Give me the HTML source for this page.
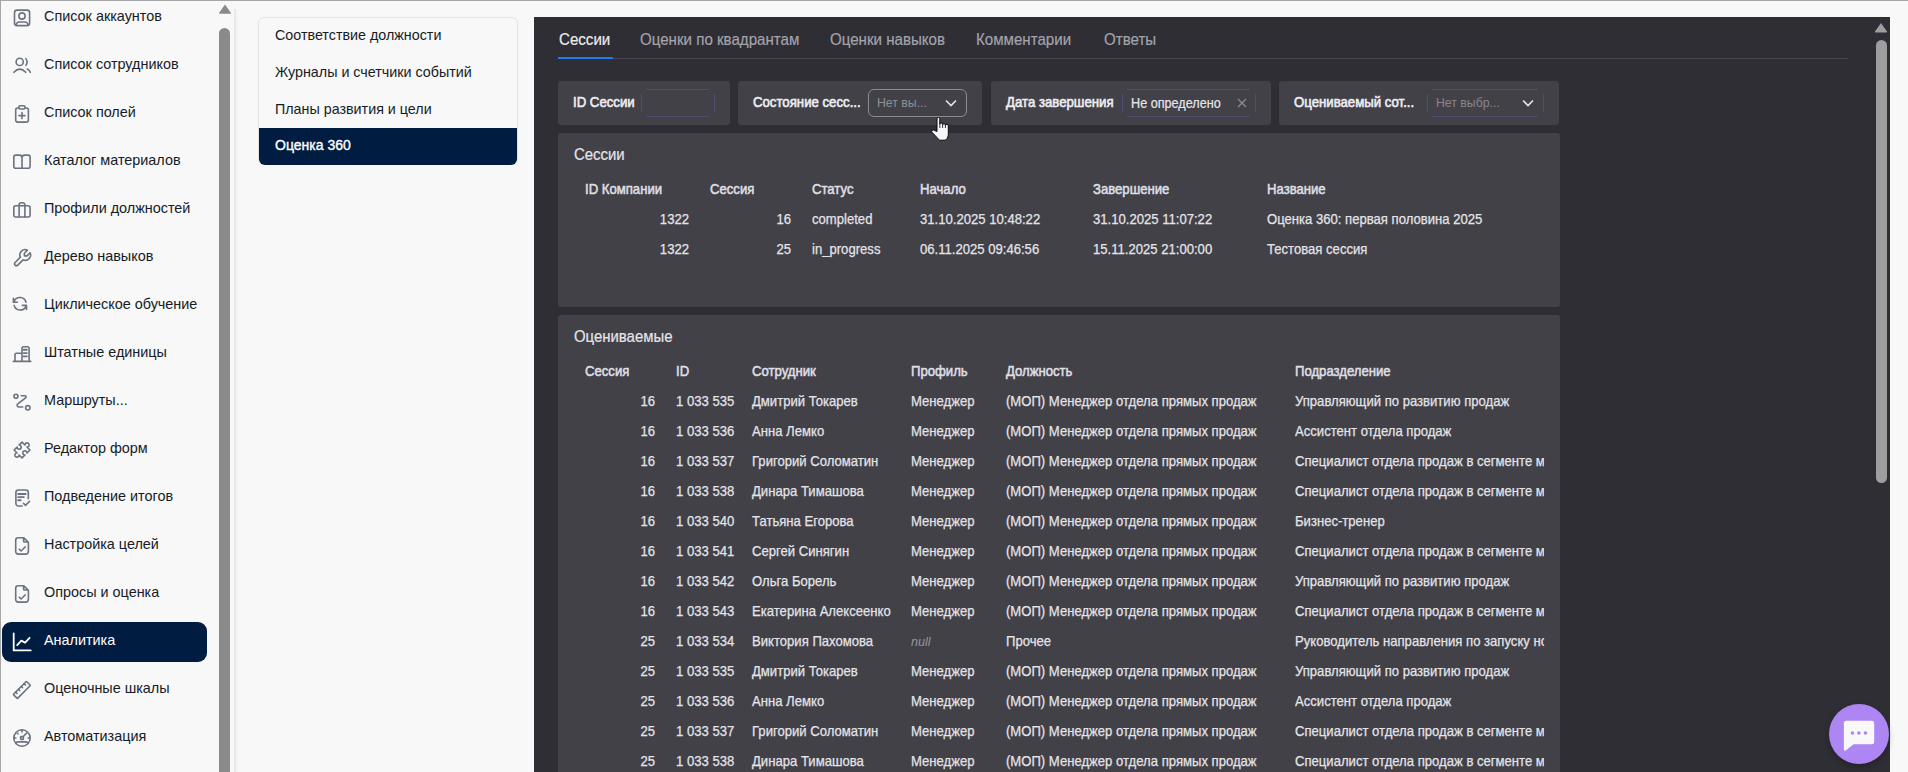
<!DOCTYPE html>
<html><head><meta charset="utf-8"><title>Аналитика</title>
<style>
html,body{margin:0;padding:0;}
body{width:1908px;height:772px;overflow:hidden;position:relative;background:#f8f8f8;font-family:"Liberation Sans",sans-serif;}
.a{position:absolute;white-space:nowrap;}
.nav{position:absolute;left:44px;font-size:14.4px;line-height:20px;color:#161b26;white-space:nowrap;}
.ic{position:absolute;left:13px;width:18px;height:18px;}
.sub{position:absolute;left:275px;font-size:14.3px;line-height:20px;color:#161b26;white-space:nowrap;}
.dp{position:absolute;left:534px;top:17px;width:1356px;height:800px;background:#2f2e35;}
.tab{position:absolute;top:30px;font-size:16.6px;line-height:20px;color:#a3a3ab;-webkit-text-stroke:0.2px #a3a3ab;white-space:nowrap;transform:scaleX(0.91);transform-origin:0 0;}
.card{position:absolute;background:#424148;border-radius:3px;}
.flab{position:absolute;font-size:13.9px;font-weight:400;-webkit-text-stroke:0.6px #ededf1;line-height:16px;color:#ededf1;white-space:nowrap;transform:scaleX(0.95);transform-origin:0 0;}
.th{position:absolute;font-size:13.9px;font-weight:400;-webkit-text-stroke:0.55px #dedee3;line-height:30px;color:#dedee3;white-space:nowrap;transform:scaleX(0.945);transform-origin:0 0;}
.td{position:absolute;font-size:14.3px;line-height:30px;color:#e4e4e8;-webkit-text-stroke:0.25px #e4e4e8;white-space:nowrap;transform:scaleX(0.916);transform-origin:0 0;}
.ttl{font-size:16.4px;line-height:20px;color:#e6e6ea;-webkit-text-stroke:0.2px #e6e6ea;transform:scaleX(0.91);transform-origin:0 0;}
.sm{font-size:13.5px;line-height:16px;transform:scaleX(0.91);transform-origin:0 0;}
.td.r{text-align:right;transform-origin:100% 0;}
</style></head><body>

<div class="a" style="left:0;top:0;width:1908px;height:1px;background:#a6a6a6"></div>
<div class="a" style="left:0;top:0;width:1px;height:772px;background:#a6a6a6"></div>
<div class="a" style="left:234px;top:9px;width:2px;height:763px;background:#e9e9ea"></div>
<div class="a" style="left:236px;top:9px;width:2px;height:763px;background:#f0f5f6"></div>
<svg class="a" style="left:217px;top:3px" width="16" height="12"><path d="M8 1.5 L14 10 Q14.3 10.8 13.3 10.8 L2.7 10.8 Q1.7 10.8 2 10 Z" fill="#8a8a8a"/></svg>
<div class="a" style="left:219px;top:28px;width:11px;height:760px;background:#8a8a8a;border-radius:5.5px"></div>
<svg class="a" style="left:0;top:0px" width="40" height="40" fill="none" stroke="#6b7280" stroke-width="1.6" stroke-linecap="round" stroke-linejoin="round"><rect x="14.5" y="10.1" width="15.1" height="15.5" rx="2.6"/><circle cx="22" cy="16" r="3.1"/><path d="M15.9 25 Q16.6 22 19.3 22 H24.8 Q27.5 22 28.2 25"/></svg>
<div class="nav" style="top:6px;">Список аккаунтов</div>
<svg class="a" style="left:0;top:48px" width="40" height="40" fill="none" stroke="#6b7280" stroke-width="1.6" stroke-linecap="round" stroke-linejoin="round"><circle cx="19.7" cy="13.9" r="3.6"/><path d="M25.9 10.6 Q28.3 13.9 25.9 17.2"/><path d="M13.9 24.3 Q19.8 18 25.7 24.3"/><path d="M27.3 21.1 Q29.3 22 30.3 24.3"/></svg>
<div class="nav" style="top:54px;">Список сотрудников</div>
<svg class="a" style="left:0;top:96px" width="40" height="40" fill="none" stroke="#6b7280" stroke-width="1.6" stroke-linecap="round" stroke-linejoin="round"><path d="M18.8 12 H17.7 A2 2 0 0 0 15.7 14 V24.1 A2 2 0 0 0 17.7 26.1 H26.4 A2 2 0 0 0 28.4 24.1 V14 A2 2 0 0 0 26.4 12 H25.2"/><rect x="18.8" y="9.8" width="6.3" height="3.2" rx="1.4"/><path d="M22 16.6 V22.6 M19 19.6 H25"/></svg>
<div class="nav" style="top:102px;">Список полей</div>
<svg class="a" style="left:0;top:144px" width="40" height="40" fill="none" stroke="#6b7280" stroke-width="1.6" stroke-linecap="round" stroke-linejoin="round"><path d="M22 24.2 H15.8 A2 2 0 0 1 13.8 22.2 V13.1 A2 2 0 0 1 15.8 11.1 H19.5 A2.5 2.5 0 0 1 22 13.6 V24.2 H28.1 A2 2 0 0 0 30.1 22.2 V13.1 A2 2 0 0 0 28.1 11.1 H24.5 A2.5 2.5 0 0 0 22 13.6"/></svg>
<div class="nav" style="top:150px;">Каталог материалов</div>
<svg class="a" style="left:0;top:192px" width="40" height="40" fill="none" stroke="#6b7280" stroke-width="1.6" stroke-linecap="round" stroke-linejoin="round"><rect x="13.8" y="13.8" width="16.3" height="11.2" rx="2"/><path d="M19.1 13.8 V12.9 A2.2 2.2 0 0 1 21.3 10.7 H22.7 A2.2 2.2 0 0 1 24.9 12.9 V13.8 M19.1 13.8 V25 M24.9 13.8 V25"/></svg>
<div class="nav" style="top:198px;">Профили должностей</div>
<svg class="a" style="left:0;top:240px" width="40" height="40" fill="none" stroke="#6b7280" stroke-width="1.6" stroke-linecap="round" stroke-linejoin="round"><path transform="translate(33.16 7.05) scale(-0.88 0.88)" d="M7 10h3v-3l-3.5 -3.5a6 6 0 0 1 8 8l6 6a2 2 0 0 1 -3 3l-6 -6a6 6 0 0 1 -8 -8l3.5 3.5" stroke-width="1.82"/></svg>
<div class="nav" style="top:246px;">Дерево навыков</div>
<svg class="a" style="left:0;top:288px" width="40" height="40" fill="none" stroke="#6b7280" stroke-width="1.6" stroke-linecap="round" stroke-linejoin="round"><path d="M14.2 13.2 A6.3 6.3 0 0 1 26 14.2 M13.4 10.3 V14.3 H17.4"/><path d="M14.1 17.4 A6.3 6.3 0 0 0 25.8 18.6 M26.5 21.6 V17.4 H22.4"/></svg>
<div class="nav" style="top:294px;">Циклическое обучение</div>
<svg class="a" style="left:0;top:336px" width="40" height="40" fill="none" stroke="#6b7280" stroke-width="1.6" stroke-linecap="round" stroke-linejoin="round"><path d="M13.4 25.4 H30.8 M15 25.4 V18.7 A1.5 1.5 0 0 1 16.5 17.2 H22 M22 25.4 V12.3 A1.5 1.5 0 0 1 23.5 10.8 H27.6 A1.5 1.5 0 0 1 29.1 12.3 V25.4"/><path d="M23.7 13.8 H26.8 M23.7 17.1 H26.8 M23.7 20.4 H26.8" stroke-width="1.9"/></svg>
<div class="nav" style="top:342px;">Штатные единицы</div>
<svg class="a" style="left:0;top:384px" width="40" height="40" fill="none" stroke="#6b7280" stroke-width="1.6" stroke-linecap="round" stroke-linejoin="round"><circle cx="15.95" cy="12.2" r="2"/><circle cx="27.8" cy="23.8" r="2.2"/><path d="M21.3 11.8 H25 A1.1 1.1 0 0 1 25.6 13.8 L17.8 19.9 A1.7 1.7 0 0 0 18.8 23 H22.7"/></svg>
<div class="nav" style="top:390px;">Маршруты...</div>
<svg class="a" style="left:0;top:432px" width="40" height="40" fill="none" stroke="#6b7280" stroke-width="1.6" stroke-linecap="round" stroke-linejoin="round"><path transform="translate(22 18) rotate(45)" d="M-5.6 -5.6 H-1.4 A2.1 2.1 0 1 1 1.4 -5.6 H5.6 V-1.4 A2.1 2.1 0 1 0 5.6 1.4 V5.6 H1.4 A2.1 2.1 0 1 1 -1.4 5.6 H-5.6 V1.4 A2.1 2.1 0 1 0 -5.6 -1.4 Z"/></svg>
<div class="nav" style="top:438px;">Редактор форм</div>
<svg class="a" style="left:0;top:480px" width="40" height="40" fill="none" stroke="#6b7280" stroke-width="1.6" stroke-linecap="round" stroke-linejoin="round"><path d="M22.2 26 H18.4 A2.5 2.5 0 0 1 15.9 23.5 V12.5 A2.5 2.5 0 0 1 18.4 10 H25.8 A2.5 2.5 0 0 1 28.3 12.5 V18.8"/><path d="M18.2 14 H25.7 M18.2 17.1 H23.8 M18.2 20.2 H20.7" stroke-width="1.9"/><path d="M23.4 23.3 L25.5 25.4 L29.6 21.3"/></svg>
<div class="nav" style="top:486px;">Подведение итогов</div>
<svg class="a" style="left:0;top:528px" width="40" height="40" fill="none" stroke="#6b7280" stroke-width="1.6" stroke-linecap="round" stroke-linejoin="round"><path d="M23.8 9.8 H18.2 A2.5 2.5 0 0 0 15.7 12.3 V23.6 A2.5 2.5 0 0 0 18.2 26.1 H25.9 A2.5 2.5 0 0 0 28.4 23.6 V14.4 Z M23.6 9.8 V13.2 A0.8 0.8 0 0 0 24.4 14 H28.4"/><path d="M19.3 21.2 L21.1 23 L25.3 18.8"/></svg>
<div class="nav" style="top:534px;">Настройка целей</div>
<svg class="a" style="left:0;top:576px" width="40" height="40" fill="none" stroke="#6b7280" stroke-width="1.6" stroke-linecap="round" stroke-linejoin="round"><path d="M23.8 9.8 H18.2 A2.5 2.5 0 0 0 15.7 12.3 V23.6 A2.5 2.5 0 0 0 18.2 26.1 H25.9 A2.5 2.5 0 0 0 28.4 23.6 V14.4 Z M23.6 9.8 V13.2 A0.8 0.8 0 0 0 24.4 14 H28.4"/><path d="M19.3 21.2 L21.1 23 L25.3 18.8"/></svg>
<div class="nav" style="top:582px;">Опросы и оценка</div>
<div class="a" style="left:2px;top:622px;width:205px;height:40px;background:#001c40;border-radius:9px"></div>
<svg class="a" style="left:0;top:624px" width="40" height="40" fill="none" stroke="#ffffff" stroke-width="1.6" stroke-linecap="round" stroke-linejoin="round"><path d="M13.7 9.3 V26.4 H30.7 M17.2 21.1 L21.3 16.6 L25.1 18.6 L29.6 13.8" stroke-width="1.8"/></svg>
<div class="nav" style="top:630px;color:#fff;font-weight:500">Аналитика</div>
<svg class="a" style="left:0;top:672px" width="40" height="40" fill="none" stroke="#6b7280" stroke-width="1.6" stroke-linecap="round" stroke-linejoin="round"><g transform="translate(21.9 17.9) rotate(-45)"><rect x="-9.3" y="-2.9" width="18.6" height="5.8" rx="0.6"/><path d="M-6 -2.9 V-1.1 M-2 -2.9 V-1.1 M2 -2.9 V-1.1 M6 -2.9 V-1.1"/></g></svg>
<div class="nav" style="top:678px;">Оценочные шкалы</div>
<svg class="a" style="left:0;top:720px" width="40" height="40" fill="none" stroke="#6b7280" stroke-width="1.6" stroke-linecap="round" stroke-linejoin="round"><circle cx="22" cy="18" r="8.2"/><rect x="20.6" y="16.6" width="2.8" height="2.8" rx="0.6"/><path d="M22 10.3 V11.9 M14.3 18 H15.9 M28.1 18 H29.7 M17.3 13.3 L18 14 M23.6 16.3 L26.6 13 M15.7 23.3 Q16.6 21.9 18.2 21.9 H25.8 Q27.4 21.9 28.3 23.3"/></svg>
<div class="nav" style="top:726px;">Автоматизация</div>
<div class="a" style="left:258px;top:17px;width:258px;height:146px;border:1px solid #e3e3e3;border-radius:6px;background:#f8f8f8"></div>
<div class="a" style="left:259px;top:128px;width:258px;height:37px;background:#001c40;border-radius:0 0 6px 6px"></div>
<div class="sub" style="top:25px">Соответствие должности</div>
<div class="sub" style="top:62px">Журналы и счетчики событий</div>
<div class="sub" style="top:99px">Планы развития и цели</div>
<div class="sub" style="top:135px;color:#fff;font-size:14px;-webkit-text-stroke:0.35px #fff">Оценка 360</div>
<div class="dp"></div>
<div class="tab" style="left:559px;color:#ececf0;-webkit-text-stroke:0.2px #ececf0">Сессии</div>
<div class="tab" style="left:640px;">Оценки по квадрантам</div>
<div class="tab" style="left:830px;">Оценки навыков</div>
<div class="tab" style="left:976px;">Комментарии</div>
<div class="tab" style="left:1104px;">Ответы</div>
<div class="a" style="left:558px;top:58px;width:1290px;height:1px;background:#46454c"></div>
<div class="a" style="left:558px;top:57px;width:55px;height:2px;background:#1e7cf2"></div>
<div class="card" style="left:558px;top:81px;width:172px;height:44px"></div>
<div class="flab" style="left:573px;top:94px">ID Сессии</div>
<div class="a" style="left:646px;top:89px;width:63px;height:1px;background:#4c4e74"></div>
<div class="a" style="left:646px;top:116px;width:63px;height:1px;background:#4c4e74"></div>
<div class="a" style="left:641px;top:94px;width:1px;height:18px;background:#4c4e74"></div>
<div class="a" style="left:714px;top:94px;width:1px;height:18px;background:#4c4e74"></div>
<div class="card" style="left:738px;top:81px;width:244px;height:44px"></div>
<div class="flab" style="left:753px;top:94px">Состояние сесс...</div>
<div class="a" style="left:868px;top:89px;width:97px;height:26px;border:1px solid #8c8c93;border-radius:6px"></div>
<div class="a sm" style="left:877px;top:95px;color:#8f8f96">Нет вы...</div>
<svg class="a" style="left:944px;top:98px" width="14" height="10"><path d="M2 2.5 L7 7.5 L12 2.5" fill="none" stroke="#e6e6ea" stroke-width="1.6"/></svg>
<div class="card" style="left:991px;top:81px;width:280px;height:44px"></div>
<div class="flab" style="left:1006px;top:94px">Дата завершения</div>
<div class="a" style="left:1127px;top:89px;width:123px;height:1px;background:#4c4e74"></div>
<div class="a" style="left:1127px;top:116px;width:123px;height:1px;background:#4c4e74"></div>
<div class="a" style="left:1122px;top:94px;width:1px;height:18px;background:#4c4e74"></div>
<div class="a" style="left:1255px;top:94px;width:1px;height:18px;background:#4c4e74"></div>
<div class="a sm" style="left:1131px;top:95px;width:100px;overflow:hidden;color:#e6e6ea;font-size:13.9px;-webkit-text-stroke:0.2px #e6e6ea">Не определено</div>
<svg class="a" style="left:1236px;top:97px" width="12" height="12"><path d="M2 2 L10 10 M10 2 L2 10" fill="none" stroke="#8a8a92" stroke-width="1.3"/></svg>
<div class="card" style="left:1279px;top:81px;width:280px;height:44px"></div>
<div class="flab" style="left:1294px;top:94px">Оцениваемый сот...</div>
<div class="a" style="left:1432px;top:89px;width:106px;height:1px;background:#4c4e74"></div>
<div class="a" style="left:1432px;top:116px;width:106px;height:1px;background:#4c4e74"></div>
<div class="a" style="left:1427px;top:94px;width:1px;height:18px;background:#4c4e74"></div>
<div class="a" style="left:1543px;top:94px;width:1px;height:18px;background:#4c4e74"></div>
<div class="a sm" style="left:1436px;top:95px;color:#86868d">Нет выбр...</div>
<svg class="a" style="left:1521px;top:98px" width="14" height="10"><path d="M2 2.5 L7 7.5 L12 2.5" fill="none" stroke="#e6e6ea" stroke-width="1.6"/></svg>
<div class="card" style="left:558px;top:133px;width:1002px;height:174px"></div>
<div class="a ttl" style="left:574px;top:144px">Сессии</div>
<div class="th" style="left:585px;top:174px">ID Компании</div>
<div class="th" style="left:710px;top:174px">Сессия</div>
<div class="th" style="left:812px;top:174px">Статус</div>
<div class="th" style="left:920px;top:174px">Начало</div>
<div class="th" style="left:1093px;top:174px">Завершение</div>
<div class="th" style="left:1267px;top:174px">Название</div>
<div class="td r" style="left:589px;width:100px;top:204px">1322</div>
<div class="td r" style="left:691px;width:100px;top:204px">16</div>
<div class="td" style="left:812px;top:204px">completed</div>
<div class="td" style="left:920px;top:204px">31.10.2025 10:48:22</div>
<div class="td" style="left:1093px;top:204px">31.10.2025 11:07:22</div>
<div class="td" style="left:1267px;top:204px">Оценка 360: первая половина 2025</div>
<div class="td r" style="left:589px;width:100px;top:234px">1322</div>
<div class="td r" style="left:691px;width:100px;top:234px">25</div>
<div class="td" style="left:812px;top:234px">in_progress</div>
<div class="td" style="left:920px;top:234px">06.11.2025 09:46:56</div>
<div class="td" style="left:1093px;top:234px">15.11.2025 21:00:00</div>
<div class="td" style="left:1267px;top:234px">Тестовая сессия</div>
<div class="card" style="left:558px;top:315px;width:1002px;height:500px"></div>
<div class="a ttl" style="left:574px;top:326px">Оцениваемые</div>
<div class="th" style="left:585px;top:356px">Сессия</div>
<div class="th" style="left:676px;top:356px">ID</div>
<div class="th" style="left:752px;top:356px">Сотрудник</div>
<div class="th" style="left:911px;top:356px">Профиль</div>
<div class="th" style="left:1006px;top:356px">Должность</div>
<div class="th" style="left:1295px;top:356px">Подразделение</div>
<div class="td r" style="left:555px;width:100px;top:386px">16</div>
<div class="td" style="left:676px;top:386px">1 033 535</div>
<div class="td" style="left:752px;top:386px">Дмитрий Токарев</div>
<div class="td" style="left:911px;top:386px">Менеджер</div>
<div class="td" style="left:1006px;top:386px">(МОП) Менеджер отдела прямых продаж</div>
<div class="td" style="left:1295px;top:386px;width:272px;overflow:hidden">Управляющий по развитию продаж</div>
<div class="td r" style="left:555px;width:100px;top:416px">16</div>
<div class="td" style="left:676px;top:416px">1 033 536</div>
<div class="td" style="left:752px;top:416px">Анна Лемко</div>
<div class="td" style="left:911px;top:416px">Менеджер</div>
<div class="td" style="left:1006px;top:416px">(МОП) Менеджер отдела прямых продаж</div>
<div class="td" style="left:1295px;top:416px;width:272px;overflow:hidden">Ассистент отдела продаж</div>
<div class="td r" style="left:555px;width:100px;top:446px">16</div>
<div class="td" style="left:676px;top:446px">1 033 537</div>
<div class="td" style="left:752px;top:446px">Григорий Соломатин</div>
<div class="td" style="left:911px;top:446px">Менеджер</div>
<div class="td" style="left:1006px;top:446px">(МОП) Менеджер отдела прямых продаж</div>
<div class="td" style="left:1295px;top:446px;width:272px;overflow:hidden">Специалист отдела продаж в сегменте малого бизнеса</div>
<div class="td r" style="left:555px;width:100px;top:476px">16</div>
<div class="td" style="left:676px;top:476px">1 033 538</div>
<div class="td" style="left:752px;top:476px">Динара Тимашова</div>
<div class="td" style="left:911px;top:476px">Менеджер</div>
<div class="td" style="left:1006px;top:476px">(МОП) Менеджер отдела прямых продаж</div>
<div class="td" style="left:1295px;top:476px;width:272px;overflow:hidden">Специалист отдела продаж в сегменте малого бизнеса</div>
<div class="td r" style="left:555px;width:100px;top:506px">16</div>
<div class="td" style="left:676px;top:506px">1 033 540</div>
<div class="td" style="left:752px;top:506px">Татьяна Егорова</div>
<div class="td" style="left:911px;top:506px">Менеджер</div>
<div class="td" style="left:1006px;top:506px">(МОП) Менеджер отдела прямых продаж</div>
<div class="td" style="left:1295px;top:506px;width:272px;overflow:hidden">Бизнес-тренер</div>
<div class="td r" style="left:555px;width:100px;top:536px">16</div>
<div class="td" style="left:676px;top:536px">1 033 541</div>
<div class="td" style="left:752px;top:536px">Сергей Синягин</div>
<div class="td" style="left:911px;top:536px">Менеджер</div>
<div class="td" style="left:1006px;top:536px">(МОП) Менеджер отдела прямых продаж</div>
<div class="td" style="left:1295px;top:536px;width:272px;overflow:hidden">Специалист отдела продаж в сегменте малого бизнеса</div>
<div class="td r" style="left:555px;width:100px;top:566px">16</div>
<div class="td" style="left:676px;top:566px">1 033 542</div>
<div class="td" style="left:752px;top:566px">Ольга Борель</div>
<div class="td" style="left:911px;top:566px">Менеджер</div>
<div class="td" style="left:1006px;top:566px">(МОП) Менеджер отдела прямых продаж</div>
<div class="td" style="left:1295px;top:566px;width:272px;overflow:hidden">Управляющий по развитию продаж</div>
<div class="td r" style="left:555px;width:100px;top:596px">16</div>
<div class="td" style="left:676px;top:596px">1 033 543</div>
<div class="td" style="left:752px;top:596px">Екатерина Алексеенко</div>
<div class="td" style="left:911px;top:596px">Менеджер</div>
<div class="td" style="left:1006px;top:596px">(МОП) Менеджер отдела прямых продаж</div>
<div class="td" style="left:1295px;top:596px;width:272px;overflow:hidden">Специалист отдела продаж в сегменте малого бизнеса</div>
<div class="td r" style="left:555px;width:100px;top:626px">25</div>
<div class="td" style="left:676px;top:626px">1 033 534</div>
<div class="td" style="left:752px;top:626px">Виктория Пахомова</div>
<div class="td" style="left:911px;top:628px;font-style:italic;color:#96969c;-webkit-text-stroke:0;font-size:12.6px;transform:none;line-height:29px">null</div>
<div class="td" style="left:1006px;top:626px">Прочее</div>
<div class="td" style="left:1295px;top:626px;width:272px;overflow:hidden">Руководитель направления по запуску новых продуктов</div>
<div class="td r" style="left:555px;width:100px;top:656px">25</div>
<div class="td" style="left:676px;top:656px">1 033 535</div>
<div class="td" style="left:752px;top:656px">Дмитрий Токарев</div>
<div class="td" style="left:911px;top:656px">Менеджер</div>
<div class="td" style="left:1006px;top:656px">(МОП) Менеджер отдела прямых продаж</div>
<div class="td" style="left:1295px;top:656px;width:272px;overflow:hidden">Управляющий по развитию продаж</div>
<div class="td r" style="left:555px;width:100px;top:686px">25</div>
<div class="td" style="left:676px;top:686px">1 033 536</div>
<div class="td" style="left:752px;top:686px">Анна Лемко</div>
<div class="td" style="left:911px;top:686px">Менеджер</div>
<div class="td" style="left:1006px;top:686px">(МОП) Менеджер отдела прямых продаж</div>
<div class="td" style="left:1295px;top:686px;width:272px;overflow:hidden">Ассистент отдела продаж</div>
<div class="td r" style="left:555px;width:100px;top:716px">25</div>
<div class="td" style="left:676px;top:716px">1 033 537</div>
<div class="td" style="left:752px;top:716px">Григорий Соломатин</div>
<div class="td" style="left:911px;top:716px">Менеджер</div>
<div class="td" style="left:1006px;top:716px">(МОП) Менеджер отдела прямых продаж</div>
<div class="td" style="left:1295px;top:716px;width:272px;overflow:hidden">Специалист отдела продаж в сегменте малого бизнеса</div>
<div class="td r" style="left:555px;width:100px;top:746px">25</div>
<div class="td" style="left:676px;top:746px">1 033 538</div>
<div class="td" style="left:752px;top:746px">Динара Тимашова</div>
<div class="td" style="left:911px;top:746px">Менеджер</div>
<div class="td" style="left:1006px;top:746px">(МОП) Менеджер отдела прямых продаж</div>
<div class="td" style="left:1295px;top:746px;width:272px;overflow:hidden">Специалист отдела продаж в сегменте малого бизнеса</div>
<svg class="a" style="left:1873px;top:21px" width="16" height="13"><path d="M8 2 L14 10.5 Q14.3 11.5 13.3 11.5 L2.7 11.5 Q1.7 11.5 2 10.5 Z" fill="#9e9e9e"/></svg>
<div class="a" style="left:1876px;top:40px;width:11px;height:443px;background:#9e9e9e;border-radius:5.5px"></div>
<svg class="a" style="left:0;top:0" width="1908" height="772" fill="none"><path d="M937 131.5 V118.8 A1.4 1.4 0 0 1 939.8 118.8 V124.3 A1.4 1.4 0 0 1 942.6 124.3 V125 A1.4 1.4 0 0 1 945.4 125 V125.6 A1.45 1.45 0 0 1 948.3 125.8 V135 Q948 139.6 945 140.2 H939.5 L932.3 132.6 A1.4 1.4 0 0 1 934.4 130.4 Z" fill="#f6f6f6" stroke="#0a0a10" stroke-width="1"/><path d="M939.8 124.3 V128 M942.6 125 V128 M945.4 125.6 V128" stroke="#0a0a10" stroke-width="0.8"/></svg>
<div class="a" style="left:1829px;top:704px;width:60px;height:60px;border-radius:50%;background:#ad86f4;box-shadow:0 3px 6px rgba(0,0,0,0.25)"></div>
<svg class="a" style="left:1840px;top:717px" width="40" height="40"><path d="M6.4 3.8 H31.7 A2.5 2.5 0 0 1 34.2 6.3 V24.7 A2.5 2.5 0 0 1 31.7 27.2 H13.5 L6 33.3 A1.2 1.2 0 0 1 3.9 32.5 V6.3 A2.5 2.5 0 0 1 6.4 3.8 Z" fill="#f8f8f8"/><circle cx="12.4" cy="16" r="1.8" fill="#ad86f4"/><circle cx="18.9" cy="16" r="1.8" fill="#ad86f4"/><circle cx="25.5" cy="16" r="1.8" fill="#ad86f4"/></svg>
</body></html>
